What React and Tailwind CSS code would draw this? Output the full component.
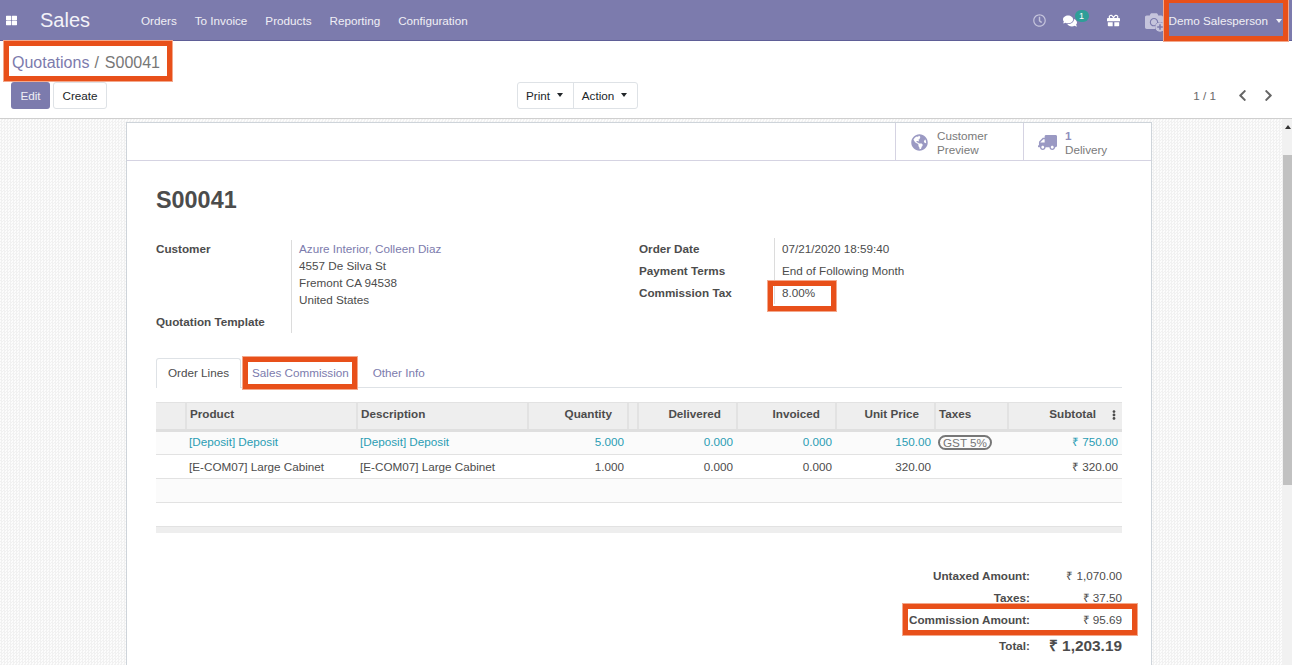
import React from "react";
import { FaThLarge, FaRegClock, FaComments, FaGift, FaCamera, FaPlusCircle, FaChevronLeft, FaChevronRight, FaGlobeAmericas, FaTruck, FaEllipsisV } from "react-icons/fa";

const Caret = ({ className = "" }) => (
  <span className={`inline-block w-0 h-0 border-x-[3px] border-x-transparent border-t-[4px] ${className}`} />
);

const Mark = ({ className }) => (
  <div className={`absolute border-[5px] border-[#e8501a] outline outline-1 outline-[#f3a88c] pointer-events-none ${className}`} />
);

const NavLink = ({ children }) => <a className="text-[11.7px] text-[#f0eff5]">{children}</a>;

const Field = ({ label, children, h }) => (
  <div className="flex">
    <div className={`font-bold w-[135px] shrink-0 text-[#4c4c4c] ${h}`}>{label}</div>
    <div className={`border-l border-[#dcdcdc] pl-[7px] ${h}`}>{children}</div>
  </div>
);

const teal = "text-[#2a9db4]";

const Th = ({ children, right, className = "" }) => (
  <th className={`font-bold text-[#4c4c4c] border-l-2 border-[#e2e2e2] first:border-l-0 px-[3px] h-[28px] pb-[5px] ${right ? "text-right pr-[15px]" : "text-left"} ${className}`}>{children}</th>
);

const Td = ({ children, right, className = "" }) => (
  <td className={`px-[3px] ${right ? "text-right pr-[4px]" : "text-left"} ${className}`}>{children}</td>
);

const Row = ({ label, value, big, className = "" }) => (
  <div className={`flex justify-end items-center ${className}`}>
    <div className="font-bold text-[#4c4c4c] text-right">{label}</div>
    <div className={`w-[92px] text-right ${big ? "font-bold text-[15.4px] text-[#4c4c4c]" : ""}`}>{value}</div>
  </div>
);

export default function App() {
  return (
    <div className="relative w-[1292px] h-[665px] overflow-hidden bg-white text-[11.7px] text-[#4c4c4c] font-['Liberation_Sans',Arial,sans-serif]">
      <header className="h-[41px] bg-[#7c7bad] border-b border-[#5f5e97] flex items-center pt-[1px] text-white">
        <FaThLarge className="ml-[6px] text-[11px]" />
        <span className="ml-[23px] text-[20px] w-[101px] text-[#f3f2f8] -mt-[1px]">Sales</span>
        <nav className="flex gap-[18px]">
          <NavLink>Orders</NavLink>
          <NavLink>To Invoice</NavLink>
          <NavLink>Products</NavLink>
          <NavLink>Reporting</NavLink>
          <NavLink>Configuration</NavLink>
        </nav>
        <div className="ml-auto flex items-center">
          <FaRegClock className="text-[13px] text-[#c5c4dc]" />
          <span className="relative ml-[17px] mr-[30px]">
            <FaComments className="text-[14px] text-white" />
            <span className="absolute -top-[4px] left-[12px] w-[14px] h-[12px] rounded-full bg-[#2f9e98] text-white text-[9px] leading-[12px] text-center">1</span>
          </span>
          <FaGift className="text-[13px] text-white" />
          <span className="relative ml-[25px] mr-[6px]">
            <FaCamera className="text-[18px] text-[#c5c4dc]" />
            <FaPlusCircle className="absolute -bottom-[2px] -right-[2px] text-[10px] text-[#c5c4dc] bg-[#7c7bad] rounded-full" />
          </span>
          <span className="text-[11.7px] text-[#f0eff5]">Demo Salesperson</span>
          <Caret className="ml-[8px] mr-[10px] border-t-[#f0eff5]" />
        </div>
      </header>

      <section className="h-[78px] border-b border-[#cfcfcf] px-[11px] pt-[11px] relative">
        <div className="text-[16px] leading-[21px] h-[30px] pl-[1px]">
          <span className="text-[#7c7bad]">Quotations</span>
          <span className="text-[#777] ml-[5px]">/</span>
          <span className="text-[#777] ml-[6px]">S00041</span>
        </div>
        <div className="flex items-center justify-between">
          <div className="flex gap-[3px] w-[400px]">
            <button className="h-[27px] w-[39px] rounded-[3px] bg-[#7c7bad] text-[#f0eff5] text-[11.7px] pt-[1px]">Edit</button>
            <button className="h-[27px] w-[54px] rounded-[3px] border border-[#dee2e6] bg-white text-[#212529] text-[11.7px] pt-[1px]">Create</button>
          </div>
          <div className="absolute left-[517px] top-[41px] flex h-[27px] border border-[#dee2e6] rounded-[3px]">
            <button className="w-[56px] flex items-center justify-center gap-[7px] text-[#212529] border-r border-[#dee2e6] text-[11.7px] pt-[1px] pr-[2px]">Print<Caret className="border-t-[#212529] -mt-[2px]" /></button>
            <button className="w-[63px] flex items-center justify-center gap-[7px] text-[#212529] text-[11.7px] pt-[1px] pr-[2px]">Action<Caret className="border-t-[#212529] -mt-[2px]" /></button>
          </div>
          <div className="flex items-center text-[#6a6a6a] text-[11.7px] pr-[6px] pt-[1px]">
            <span className="mr-[20px]">1 / 1</span>
            <FaChevronLeft className="text-[13px] text-[#666] mr-[13px]" />
            <FaChevronRight className="text-[13px] text-[#666]" />
          </div>
        </div>
      </section>

      <main className="flex h-[546px] bg-[repeating-conic-gradient(#f1f1f1_0_25%,#fcfcfc_0_50%)] bg-[length:3px_3px]">
        <div className="flex-1 min-w-0 overflow-hidden pt-[3px] pl-[126px]">
          <div className="w-[1026px] h-[700px] bg-white border border-[#ced4da]">
            <div className="h-[38px] border-b border-[#d5d3e2] flex justify-end">
              <div className="w-[128px] border-l border-[#d5d3e2] flex items-center pl-[15px] gap-[9px] text-[#7a7a7a] text-[11.7px] leading-[14px] pt-[2px]">
                <FaGlobeAmericas className="text-[17px] text-[#9a99c3] shrink-0" />
                <span>Customer<br />Preview</span>
              </div>
              <div className="w-[128px] border-l border-[#d5d3e2] flex items-center pl-[14px] gap-[8px] text-[#7a7a7a] text-[11.7px] leading-[14px] pt-[2px]">
                <FaTruck className="text-[19px] text-[#9a99c3] shrink-0 -scale-x-100" />
                <span><b className="text-[#8f8ebc]">1</b><br />Delivery</span>
              </div>
            </div>

            <div className="px-[29px]">
              <h1 className="text-[23.4px] leading-[28px] font-bold text-[#4c4c4c] mt-[25px]">S00041</h1>

              <div className="flex mt-[26px]">
                <div className="w-[483px]">
                  <Field label="Customer" h="h-[68px]">
                    <div className="leading-[17px]">
                      <div className="text-[#7c7bad]">Azure Interior, Colleen Diaz</div>
                      <div>4557 De Silva St</div>
                      <div>Fremont CA 94538</div>
                      <div>United States</div>
                    </div>
                  </Field>
                  <div className="flex">
                    <div className="w-[135px] font-bold h-[20px] pt-[5px] box-content">Quotation Template</div>
                    <div className="border-l border-[#dcdcdc] h-[25px]" />
                  </div>
                </div>
                <div className="leading-[22px] -mt-[2px]">
                  <div className="flex"><div className="w-[135px] font-bold">Order Date</div><div className="border-l border-[#dcdcdc] pl-[7px]">07/21/2020 18:59:40</div></div>
                  <div className="flex"><div className="w-[135px] font-bold">Payment Terms</div><div className="border-l border-[#dcdcdc] pl-[7px]">End of Following Month</div></div>
                  <div className="flex"><div className="w-[135px] font-bold">Commission Tax</div><div className="border-l border-[#dcdcdc] pl-[7px]">8.00%</div></div>
                </div>
              </div>

              <div className="flex mt-[25px] h-[30px] border-b border-[#dee2e6]">
                <div className="w-[85px] h-[30px] pb-[2px] border border-b-0 border-[#dee2e6] rounded-t-[3px] bg-white flex items-center justify-center text-[#4c4c4c]">Order Lines</div>
                <div className="ml-[11px] h-[29px] flex items-center text-[#7c7bad]">Sales Commission</div>
                <div className="ml-[24px] h-[29px] flex items-center text-[#7c7bad]">Other Info</div>
              </div>

              <table className="table-fixed w-[966px] mt-[14px] border-collapse">
                <colgroup>
                  <col className="w-[30px]" /><col className="w-[171px]" /><col className="w-[171px]" /><col className="w-[100px]" /><col className="w-[10px]" /><col className="w-[99px]" /><col className="w-[99px]" /><col className="w-[99px]" /><col className="w-[73px]" /><col className="w-[114px]" />
                </colgroup>
                <thead>
                  <tr className="bg-[#eeeeee] border-t border-[#e2e2e2] border-b-[3px] border-b-[#dfdfdf]">
                    <Th />
                    <Th>Product</Th>
                    <Th>Description</Th>
                    <Th right>Quantity</Th>
                    <Th />
                    <Th right>Delivered</Th>
                    <Th right>Invoiced</Th>
                    <Th right>Unit Price</Th>
                    <Th>Taxes</Th>
                    <Th right className="relative pr-[26px]">Subtotal<FaEllipsisV className="absolute right-[3px] top-[7px] text-[10px]" /></Th>
                  </tr>
                </thead>
                <tbody>
                  <tr className={`h-[24px] bg-[#fbfbfb] border-b border-[#e2e2e2] ${teal}`}>
                    <Td />
                    <Td className="pb-[2px]">[Deposit] Deposit</Td>
                    <Td className="pb-[2px]">[Deposit] Deposit</Td>
                    <Td right className="pb-[2px]">5.000</Td>
                    <Td />
                    <Td right className="pb-[2px]">0.000</Td>
                    <Td right className="pb-[2px]">0.000</Td>
                    <Td right className="pb-[2px]">150.00</Td>
                    <Td className="align-top pt-[3px]"><span className="block h-[15px] w-[54px] leading-[12px] text-center border-2 border-[#777] rounded-[8px] text-[#777]">GST 5%</span></Td>
                    <Td right className="pb-[2px] pr-[3px]">₹ 750.00</Td>
                  </tr>
                  <tr className="h-[24px] border-b border-[#e2e2e2]">
                    <Td />
                    <Td>[E-COM07] Large Cabinet</Td>
                    <Td>[E-COM07] Large Cabinet</Td>
                    <Td right>1.000</Td>
                    <Td />
                    <Td right>0.000</Td>
                    <Td right>0.000</Td>
                    <Td right>320.00</Td>
                    <Td />
                    <Td right className="pr-[3px]">₹ 320.00</Td>
                  </tr>
                  <tr className="h-[24px] bg-[#fbfbfb] border-b border-[#e2e2e2]"><td colSpan={10} /></tr>
                  <tr className="h-[24px] border-b border-[#e2e2e2]"><td colSpan={10} /></tr>
                  <tr className="h-[6px] bg-[#eeeeee]"><td colSpan={10} /></tr>
                </tbody>
              </table>

              <div className="mt-[32px] w-[966px]">
                <Row label="Untaxed Amount:" value="₹ 1,070.00" className="h-[22px]" />
                <Row label="Taxes:" value="₹ 37.50" className="h-[22px]" />
                <Row label="Commission Amount:" value="₹ 95.69" className="h-[22px]" />
                <Row label="Total:" value="₹ 1,203.19" big className="h-[30px]" />
              </div>
            </div>
          </div>
        </div>
        <div className="w-[9px] shrink-0 bg-[#f1f1f1] flex flex-col items-center">
          <Caret className="mt-[6px] rotate-180 border-t-[#333]" />
          <div className="mt-[26px] w-full h-[330px] bg-[#c1c1c1]" />
        </div>
      </main>

      <Mark className="left-[4px] top-[41px] w-[168px] h-[40px]" />
      <Mark className="left-[1164px] -top-[2px] w-[124px] h-[43px]" />
      <Mark className="left-[768px] top-[281px] w-[68px] h-[30px]" />
      <Mark className="left-[243px] top-[357px] w-[114px] h-[32px]" />
      <Mark className="left-[903px] top-[604px] w-[234px] h-[31px]" />
    </div>
  );
}
